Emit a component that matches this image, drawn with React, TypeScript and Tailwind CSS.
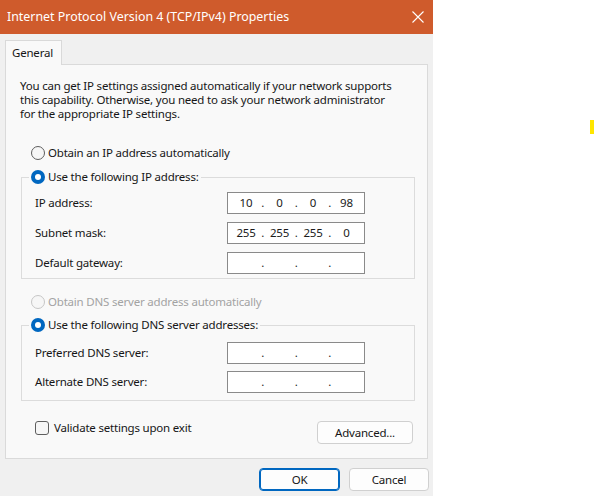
import React from "react";

type Octets = [string, string, string, string];

function Radio({ checked = false, disabled = false }: { checked?: boolean; disabled?: boolean }) {
  if (checked) {
    return (
      <span className="flex h-[14px] w-[14px] shrink-0 items-center justify-center rounded-full bg-[#0067c0]">
        <span className="h-[6px] w-[6px] rounded-full bg-white" />
      </span>
    );
  }
  return (
    <span
      className={`h-[14px] w-[14px] shrink-0 rounded-full border bg-[#f6f6f6] ${
        disabled ? "border-[#c6c6c6]" : "border-[#5e5e5e]"
      }`}
    />
  );
}

function IpBox({ value }: { value?: Octets }) {
  const parts = value ?? ["", "", "", ""];
  return (
    <div className="flex h-[22px] w-[138px] items-center border border-[#8a8a8a] bg-white pl-[5px] text-[#1b1b1b]">
      {parts.map((p, i) => (
        <React.Fragment key={i}>
          <span className="w-[26px] text-center">{p}</span>
          {i < 3 && <span className="w-[7.5px] text-center">.</span>}
        </React.Fragment>
      ))}
    </div>
  );
}

function Row({ label, value }: { label: string; value?: Octets }) {
  return (
    <div className="flex h-[22px] items-center">
      <span className="w-[192px]">{label}</span>
      <IpBox value={value} />
    </div>
  );
}

export default function App() {
  return (
    <div
      className="flex h-[496px] w-[596px] overflow-hidden whitespace-nowrap bg-white text-[11.5px] leading-[14px] tracking-[-0.2px] text-[#161616]"
      style={{ fontFamily: '"Noto Sans", "Open Sans", sans-serif' }}
    >
      <div className="flex w-[433px] flex-col bg-[#f0f0f0]">
        {/* title bar */}
        <div className="flex h-[34px] shrink-0 items-center justify-between bg-[#cf5b2c] pl-[7px] pr-[8px] text-[12.4px] tracking-normal text-white">
          <span>Internet Protocol Version 4 (TCP/IPv4) Properties</span>
          <svg width="12" height="12" viewBox="0 0 12 12" className="mr-[1px]">
            <path d="M0.5 0.5 L11.5 11.5 M11.5 0.5 L0.5 11.5" stroke="white" strokeWidth="1.1" fill="none" />
          </svg>
        </div>

        <div className="flex flex-col px-[5px] pt-[6px]">
          {/* tab */}
          <div className="relative z-10 -mb-px flex h-[25px] w-[57px] items-center border border-b-0 border-[#d9d9d9] bg-[#f9f9f9] pl-[6px]">
            General
          </div>

          {/* panel */}
          <div className="flex h-[395px] w-[423px] flex-col border border-[#dadada] bg-[#f9f9f9] px-[14px] pt-[14px]">
            <p>
              You can get IP settings assigned automatically if your network supports
              <br />
              this capability. Otherwise, you need to ask your network administrator
              <br />
              for the appropriate IP settings.
            </p>

            <div className="mt-[24px] flex h-[16px] items-center gap-[3px] pl-[11px]">
              <Radio />
              <span>Obtain an IP address automatically</span>
            </div>

            <fieldset className="ml-[1px] mt-[8px] w-[394px] border border-[#dcdcdc] pb-[4px]">
              <legend className="ml-[7px] flex h-[16px] items-center gap-[3px] px-[2px]">
                <Radio checked />
                <span>Use the following IP address:</span>
              </legend>
              <div className="flex flex-col gap-[8px] pl-[13px] pt-[7px]">
                <Row label="IP address:" value={["10", "0", "0", "98"]} />
                <Row label="Subnet mask:" value={["255", "255", "255", "0"]} />
                <Row label="Default gateway:" />
              </div>
            </fieldset>

            <div className="mt-[15px] flex h-[16px] items-center gap-[3px] pl-[11px] text-[#a3a3a3]">
              <Radio disabled />
              <span>Obtain DNS server address automatically</span>
            </div>

            <fieldset className="ml-[1px] mt-[7px] w-[394px] border border-[#dcdcdc] pb-[7px]">
              <legend className="ml-[7px] flex h-[16px] items-center gap-[3px] px-[2px]">
                <Radio checked />
                <span>Use the following DNS server addresses:</span>
              </legend>
              <div className="flex flex-col gap-[7px] pl-[13px] pt-[9px]">
                <Row label="Preferred DNS server:" />
                <Row label="Alternate DNS server:" />
              </div>
            </fieldset>

            <div className="mt-[20px] flex items-start justify-between">
              <div className="flex h-[14px] items-center gap-[5px] pl-[15px]">
                <span className="h-[14px] w-[14px] rounded-[3px] border border-[#5e5e5e] bg-[#f6f6f6]" />
                <span>Validate settings upon exit</span>
              </div>
              <button className="flex h-[23px] w-[96px] items-center justify-center rounded-[4px] border border-[#d0d0d0] bg-[#fdfdfd]">
                Advanced...
              </button>
            </div>
          </div>
        </div>

        {/* dialog buttons */}
        <div className="mt-[9px] flex justify-end gap-[9px] pr-[4px]">
          <button className="flex h-[23px] w-[81px] items-center justify-center rounded-[4px] border border-[#0067c0] bg-[#fdfdfd] shadow-[inset_0_0_0_1px_#0067c0]">
            OK
          </button>
          <button className="flex h-[23px] w-[80px] items-center justify-center rounded-[4px] border border-[#d0d0d0] bg-[#fdfdfd]">
            Cancel
          </button>
        </div>
      </div>

      <div className="flex-1">
        <div className="ml-[157px] mt-[120px] h-[14px] w-[4px] bg-[#ffe600]" />
      </div>
    </div>
  );
}
